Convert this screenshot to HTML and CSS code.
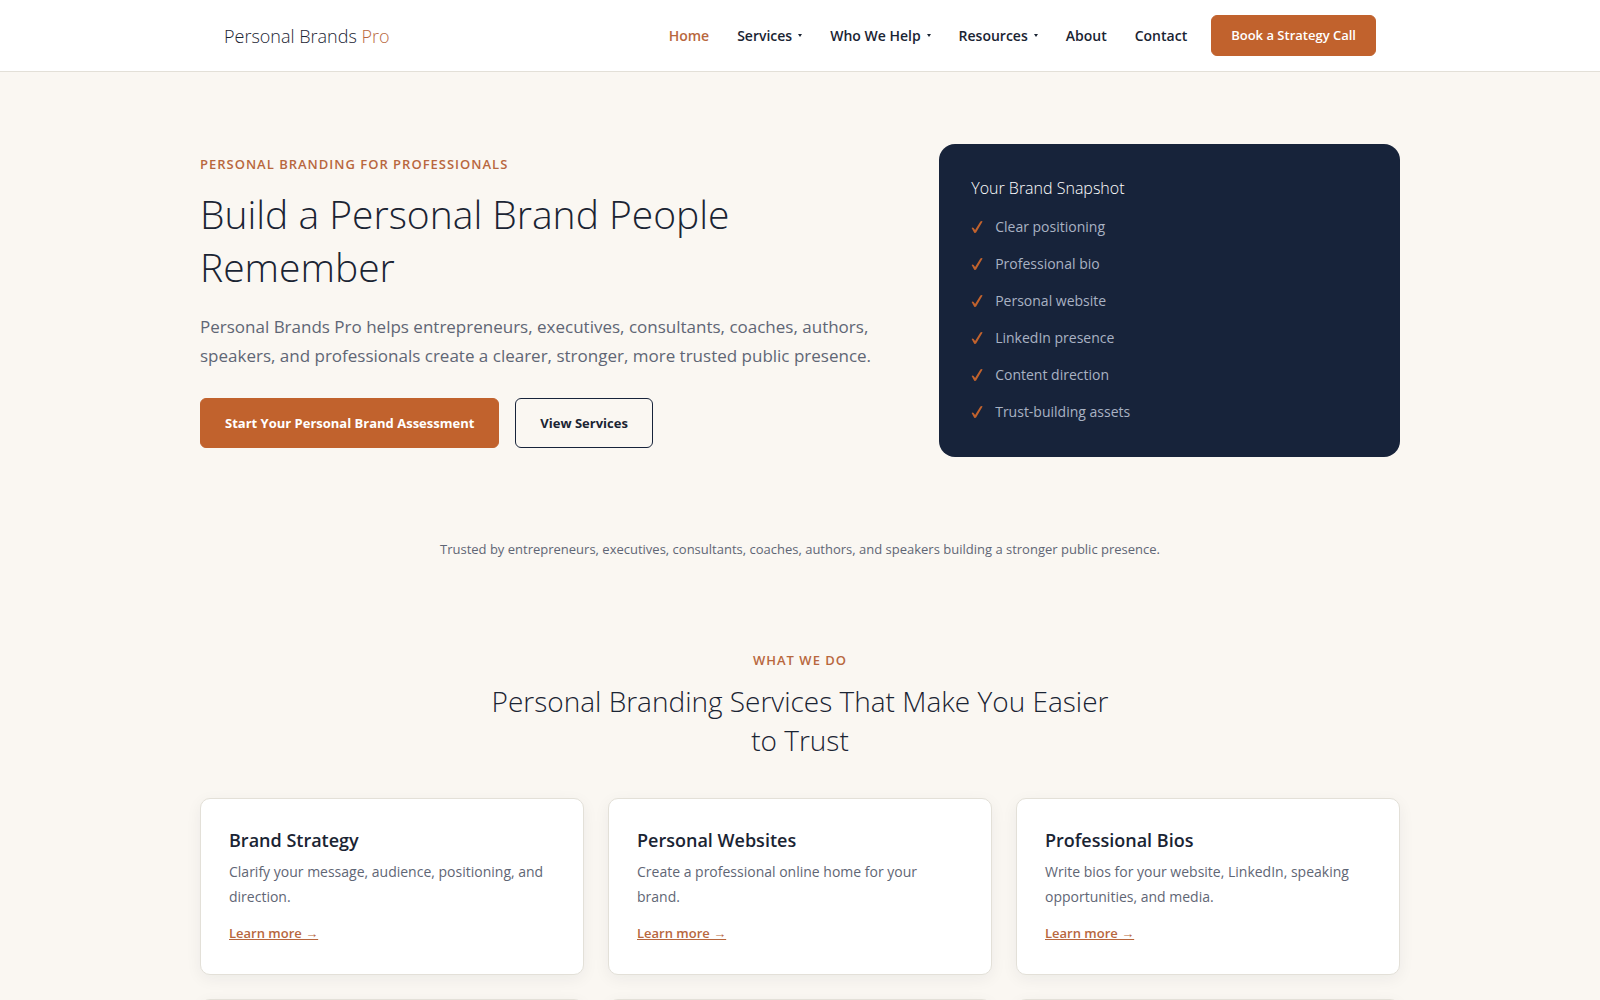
FILE: index.html
```html
<!doctype html>
<html lang="en">
<head>
	<meta charset="utf-8">
	<meta name="viewport" content="width=device-width, initial-scale=1">
	<title>Personal Brands Pro</title>
	<link rel="stylesheet" href="styles.css">
</head>
<body>
<header class="site-header">
	<div class="container header-inner">
		<a class="logo" href="#">Personal Brands <span>Pro</span></a>
		<nav class="main-nav">
			<ul class="nav-list">
				<li><a class="active" href="#">Home</a></li>
				<li><a class="has-menu" href="#">Services</a></li>
				<li><a class="has-menu" href="#">Who We Help</a></li>
				<li><a class="has-menu" href="#">Resources</a></li>
				<li><a href="#">About</a></li>
				<li><a href="#">Contact</a></li>
			</ul>
			<a class="btn btn-primary btn-small" href="#">Book a Strategy Call</a>
		</nav>
	</div>
</header>

<main>
	<section class="hero container">
		<div class="hero-text">
			<p class="eyebrow">Personal Branding for Professionals</p>
			<h1>Build a Personal Brand People Remember</h1>
			<p class="lead">Personal Brands Pro helps entrepreneurs, executives, consultants, coaches, authors, speakers, and professionals create a clearer, stronger, more trusted public presence.</p>
			<div class="hero-actions">
				<a class="btn btn-primary" href="#">Start Your Personal Brand Assessment</a>
				<a class="btn btn-outline" href="#">View Services</a>
			</div>
		</div>
		<aside class="snapshot">
			<h2>Your Brand Snapshot</h2>
			<ul>
				<li><svg class="check" viewBox="0 0 12 14"><path d="M.6 7.9Q1.6 7 2.6 7.9L4.1 10 9.4 1.5Q10.8.6 11.6 1.6L5.1 12.6Q4 13.6 3.1 12.5Z"/></svg>Clear positioning</li>
				<li><svg class="check" viewBox="0 0 12 14"><path d="M.6 7.9Q1.6 7 2.6 7.9L4.1 10 9.4 1.5Q10.8.6 11.6 1.6L5.1 12.6Q4 13.6 3.1 12.5Z"/></svg>Professional bio</li>
				<li><svg class="check" viewBox="0 0 12 14"><path d="M.6 7.9Q1.6 7 2.6 7.9L4.1 10 9.4 1.5Q10.8.6 11.6 1.6L5.1 12.6Q4 13.6 3.1 12.5Z"/></svg>Personal website</li>
				<li><svg class="check" viewBox="0 0 12 14"><path d="M.6 7.9Q1.6 7 2.6 7.9L4.1 10 9.4 1.5Q10.8.6 11.6 1.6L5.1 12.6Q4 13.6 3.1 12.5Z"/></svg>LinkedIn presence</li>
				<li><svg class="check" viewBox="0 0 12 14"><path d="M.6 7.9Q1.6 7 2.6 7.9L4.1 10 9.4 1.5Q10.8.6 11.6 1.6L5.1 12.6Q4 13.6 3.1 12.5Z"/></svg>Content direction</li>
				<li><svg class="check" viewBox="0 0 12 14"><path d="M.6 7.9Q1.6 7 2.6 7.9L4.1 10 9.4 1.5Q10.8.6 11.6 1.6L5.1 12.6Q4 13.6 3.1 12.5Z"/></svg>Trust-building assets</li>
			</ul>
		</aside>
	</section>

	<p class="trust">Trusted by entrepreneurs, executives, consultants, coaches, authors, and speakers building a stronger public presence.</p>

	<section class="services container">
		<div class="section-head">
			<p class="eyebrow">What We Do</p>
			<h2>Personal Branding Services That Make You Easier to Trust</h2>
		</div>
		<div class="card-grid">
			<article class="card">
				<h3>Brand Strategy</h3>
				<p>Clarify your message, audience, positioning, and direction.</p>
				<a href="#">Learn more →</a>
			</article>
			<article class="card">
				<h3>Personal Websites</h3>
				<p>Create a professional online home for your brand.</p>
				<a href="#">Learn more →</a>
			</article>
			<article class="card">
				<h3>Professional Bios</h3>
				<p>Write bios for your website, LinkedIn, speaking opportunities, and media.</p>
				<a href="#">Learn more →</a>
			</article>
			<article class="card"></article>
			<article class="card"></article>
			<article class="card"></article>
		</div>
	</section>
</main>
</body>
</html>
```
FILE: styles.css
```css
:root{
	--navy:#17233a;
	--ink:#1a2433;
	--muted:#5f6675;
	--accent:#c1622d;
	--accent-text:#b8673e;
	--bg:#faf7f2;
	--line:#e3e0d8;
}
*{box-sizing:border-box;margin:0;padding:0;}
body{background:var(--bg);color:var(--ink);font-family:"Segoe UI","Open Sans","Noto Sans",sans-serif;font-size:16px;line-height:26px;}
ul{list-style:none;}
a{color:inherit;text-decoration:none;}
.container{max-width:1200px;margin:0 auto;}

.site-header{background:#fff;border-bottom:1px solid var(--line);}
.header-inner{display:flex;align-items:center;justify-content:space-between;padding:15px 24px;}
.logo{font-size:18px;font-weight:300;}
.logo span{color:var(--accent-text);}
.main-nav{display:flex;align-items:center;gap:24px;}
.nav-list{display:flex;gap:28px;font-size:14px;font-weight:600;}
.nav-list .active{color:var(--accent-text);}
.has-menu{display:flex;align-items:center;gap:6px;}
.has-menu::after{content:"";border:2px solid transparent;border-top:3px solid var(--ink);border-bottom:0;}

.btn{display:inline-block;padding:12px 24px;border:1px solid var(--accent);border-radius:6px;font-size:13px;font-weight:700;line-height:24px;text-align:center;}
.btn-primary{background:var(--accent);color:#fff;}
.btn-outline{border-color:var(--navy);}
.btn-small{padding:8px 19px;font-weight:600;line-height:23px;}

.hero{display:grid;grid-template-columns:3fr 2fr;gap:48px;align-items:center;padding:72px 0;}
.eyebrow{color:var(--accent-text);font-size:13px;font-weight:600;line-height:22px;letter-spacing:1px;text-transform:uppercase;}
h1{margin:12px 0 19px;font-size:39px;font-weight:300;line-height:53px;}
.lead{color:var(--muted);font-size:17px;line-height:29px;}
.hero-actions{display:flex;flex-wrap:wrap;gap:16px;margin-top:28px;}

.snapshot{background:var(--navy);border-radius:16px;padding:32px;}
.snapshot h2{color:#fff;font-size:16px;font-weight:300;line-height:24px;}
.snapshot ul{display:grid;gap:12px;padding:14px 0 1px;}
.snapshot li{display:flex;align-items:center;gap:12px;color:#a9b2c3;font-size:14px;line-height:25px;}
.check{width:12px;height:14px;fill:var(--accent);}

.trust{padding:8px 24px;color:var(--muted);font-size:13px;line-height:24px;text-align:center;}

.services{padding:80px 0;}
.section-head{max-width:640px;margin:0 auto 38px;text-align:center;}
.section-head h2{margin-top:11px;font-size:28px;font-weight:300;line-height:39px;}
.card-grid{display:grid;grid-template-columns:repeat(3,1fr);gap:24px;}
.card{background:#fff;border:1px solid var(--line);border-radius:10px;padding:28px;box-shadow:0 4px 16px rgba(23,35,58,.06);}
.card h3{font-size:18px;font-weight:600;line-height:26px;}
.card p{margin:6px 0 10px;color:var(--muted);font-size:14px;line-height:25px;}
.card a{color:var(--accent-text);font-size:13px;font-weight:600;text-decoration:underline;}

@media (max-width:1000px){
	.header-inner,.main-nav,.nav-list{flex-wrap:wrap;}
	.hero,.card-grid{grid-template-columns:1fr;}
	.container{padding-left:24px;padding-right:24px;}
}
```
